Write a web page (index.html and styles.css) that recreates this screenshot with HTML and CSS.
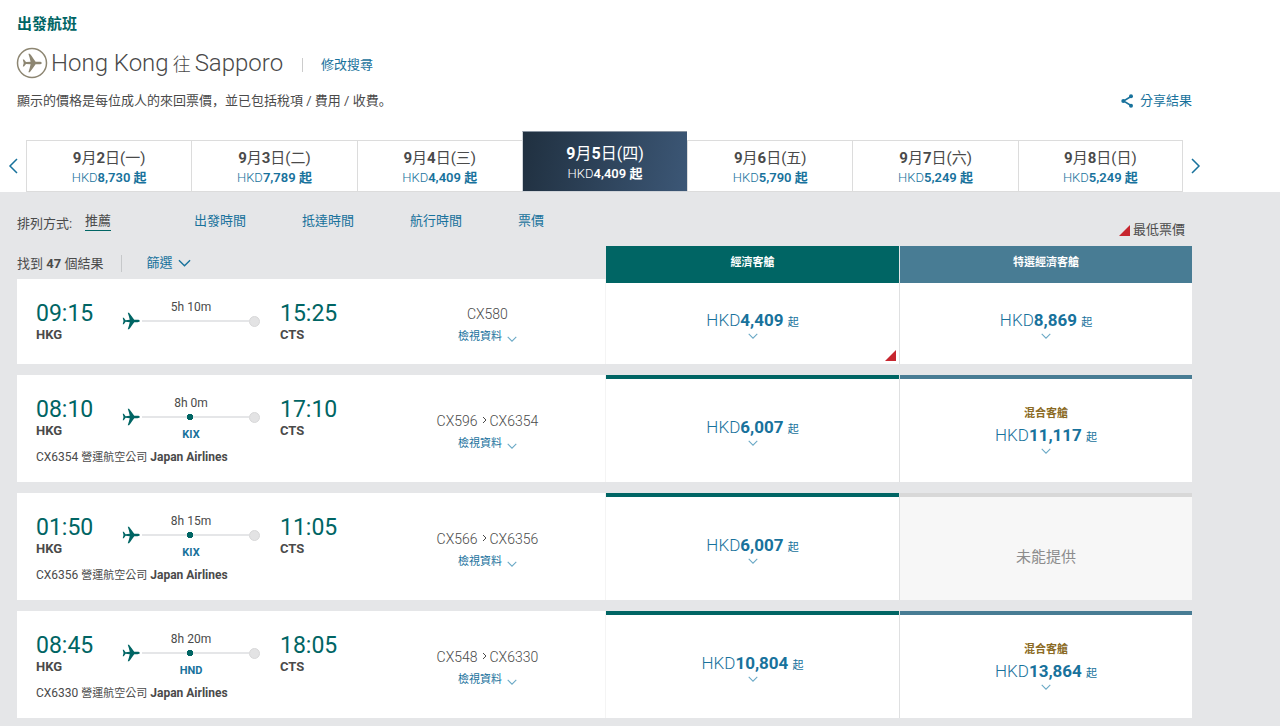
FILE: index.html
```html
<!DOCTYPE html>
<html lang="zh-Hant">
<head>
<meta charset="utf-8">
<meta name="viewport" content="width=device-width, initial-scale=1">
<title>出發航班</title>
<link rel="stylesheet" href="styles.css">
</head>
<body>
<svg class="symbols" aria-hidden="true">
  <symbol id="plane" viewBox="0 0 20 20">
    <path d="M19.800 10c0-.8-1.200-1.300-2.600-1.300h-3.600C12 6.500 10.200 3.600 7.800.8H6.400c.9 2.600 1.700 5.200 2.200 7.900L4 9.100 2 6.500H.8L1.700 10 .8 13.500H2l2-2.600 4.600.4c-.5 2.700-1.300 5.300-2.200 7.900h1.400c2.400-2.800 4.200-5.700 5.800-7.900h3.600c1.400 0 2.600-.5 2.600-1.300z"/>
  </symbol>
  <symbol id="down" viewBox="0 0 14 8">
    <path d="M1 1l6 6 6-6" fill="none" stroke="currentColor" stroke-width="1.500"/>
  </symbol>
</svg>

<header class="page-head wrap">
  <h1 class="title">出發航班</h1>
  <div class="trip">
    <svg class="trip-icon" viewBox="0 0 32 32" aria-hidden="true">
      <circle cx="16" cy="16" r="14.500" fill="none" stroke="currentColor" stroke-width="1.500"/>
      <use href="#plane" x="6" y="6" width="20" height="20"/>
    </svg>
    <h2 class="route-name">Hong Kong<span class="to">往</span>Sapporo</h2>
    <a class="modify" href="#">修改搜尋</a>
  </div>
  <div class="note-row">
    <p class="note" lang="zh-Hans">顯示的價格是每位成人的來回票價，並已包括稅項 / 費用 / 收費。</p>
    <a class="share" href="#">
      <svg class="share-icon" viewBox="0 0 12 14" aria-hidden="true"><path d="M10 2.500L2.500 7l7.500 4.500" fill="none" stroke="currentColor" stroke-width="1.500"/><circle cx="10" cy="2.300" r="2"/><circle cx="2.300" cy="7" r="2"/><circle cx="10" cy="11.700" r="2"/></svg>
      分享結果
    </a>
  </div>
</header>

<nav class="dates" aria-label="日期">
  <button class="arrow" aria-label="前"><svg viewBox="0 0 10 16"><path d="M9 1L2 8l7 7"/></svg></button>
  <div class="tabs">
    <button class="tab"><span class="day"><b>9</b>月<b>2</b>日(一)</span><span class="fare">HKD<b>8,730 起</b></span></button>
    <button class="tab"><span class="day"><b>9</b>月<b>3</b>日(二)</span><span class="fare">HKD<b>7,789 起</b></span></button>
    <button class="tab"><span class="day"><b>9</b>月<b>4</b>日(三)</span><span class="fare">HKD<b>4,409 起</b></span></button>
    <button class="tab active" aria-current="date"><span class="day"><b>9</b>月<b>5</b>日(四)</span><span class="fare">HKD<b>4,409 起</b></span></button>
    <button class="tab"><span class="day"><b>9</b>月<b>6</b>日(五)</span><span class="fare">HKD<b>5,790 起</b></span></button>
    <button class="tab"><span class="day"><b>9</b>月<b>7</b>日(六)</span><span class="fare">HKD<b>5,249 起</b></span></button>
    <button class="tab"><span class="day"><b>9</b>月<b>8</b>日(日)</span><span class="fare">HKD<b>5,249 起</b></span></button>
  </div>
  <button class="arrow" aria-label="後"><svg viewBox="0 0 10 16"><path d="M1 1l7 7-7 7"/></svg></button>
</nav>

<main class="results">
  <div class="wrap">
    <div class="sort">
      <span class="sort-label">排列方式:</span>
      <button class="sort-by current">推薦</button>
      <button class="sort-by">出發時間</button>
      <button class="sort-by">抵達時間</button>
      <button class="sort-by">航行時間</button>
      <button class="sort-by">票價</button>
      <span class="legend"><svg class="flag" viewBox="0 0 11 11" aria-hidden="true"><path d="M11 0v11H0z"/></svg>最低票價</span>
    </div>

    <div class="columns">
      <div class="found">
        <span class="count">找到 <b>47</b> 個結果</span>
        <button class="filter">篩選<svg class="filter-icon" aria-hidden="true"><use href="#down"/></svg></button>
      </div>
      <div class="cabin economy">經濟客艙</div>
      <div class="cabin premium">特選經濟客艙</div>
    </div>

    <article class="card">
      <div class="flight">
        <div class="leg">
          <div class="stop"><span class="time">09:15</span><span class="code">HKG</span></div>
          <div class="path"><span class="duration">5h 10m</span><span class="track"><svg class="plane" aria-hidden="true"><use href="#plane"/></svg><span class="line"></span><span class="end"></span></span></div>
          <div class="stop"><span class="time">15:25</span><span class="code">CTS</span></div>
        </div>
      </div>
      <div class="info"><span class="numbers">CX580</span><button class="details">檢視資料<svg class="chev" aria-hidden="true"><use href="#down"/></svg></button></div>
      <button class="price economy"><span class="amount">HKD<b>4,409</b> <small>起</small></span><svg class="chev" aria-hidden="true"><use href="#down"/></svg><svg class="flag lowest" viewBox="0 0 11 11" aria-hidden="true"><path d="M11 0v11H0z"/></svg></button>
      <button class="price premium"><span class="amount">HKD<b>8,869</b> <small>起</small></span><svg class="chev" aria-hidden="true"><use href="#down"/></svg></button>
    </article>

    <article class="card">
      <div class="flight">
        <div class="leg">
          <div class="stop"><span class="time">08:10</span><span class="code">HKG</span></div>
          <div class="path"><span class="duration">8h 0m</span><span class="track"><svg class="plane" aria-hidden="true"><use href="#plane"/></svg><span class="line via"></span><span class="end"></span></span><a class="via-code" href="#">KIX</a></div>
          <div class="stop"><span class="time">17:10</span><span class="code">CTS</span></div>
        </div>
        <p class="operated">CX6354 <span class="by">營運航空公司</span> <b>Japan Airlines</b></p>
      </div>
      <div class="info"><span class="numbers">CX596<svg class="next" viewBox="0 0 5 8" aria-hidden="true"><path d="M1 1l3 3-3 3"/></svg>CX6354</span><button class="details">檢視資料<svg class="chev" aria-hidden="true"><use href="#down"/></svg></button></div>
      <button class="price economy"><span class="amount">HKD<b>6,007</b> <small>起</small></span><svg class="chev" aria-hidden="true"><use href="#down"/></svg></button>
      <button class="price premium"><span class="mixed">混合客艙</span><span class="amount">HKD<b>11,117</b> <small>起</small></span><svg class="chev" aria-hidden="true"><use href="#down"/></svg></button>
    </article>

    <article class="card">
      <div class="flight">
        <div class="leg">
          <div class="stop"><span class="time">01:50</span><span class="code">HKG</span></div>
          <div class="path"><span class="duration">8h 15m</span><span class="track"><svg class="plane" aria-hidden="true"><use href="#plane"/></svg><span class="line via"></span><span class="end"></span></span><a class="via-code" href="#">KIX</a></div>
          <div class="stop"><span class="time">11:05</span><span class="code">CTS</span></div>
        </div>
        <p class="operated">CX6356 <span class="by">營運航空公司</span> <b>Japan Airlines</b></p>
      </div>
      <div class="info"><span class="numbers">CX566<svg class="next" viewBox="0 0 5 8" aria-hidden="true"><path d="M1 1l3 3-3 3"/></svg>CX6356</span><button class="details">檢視資料<svg class="chev" aria-hidden="true"><use href="#down"/></svg></button></div>
      <button class="price economy"><span class="amount">HKD<b>6,007</b> <small>起</small></span><svg class="chev" aria-hidden="true"><use href="#down"/></svg></button>
      <div class="price none">未能提供</div>
    </article>

    <article class="card">
      <div class="flight">
        <div class="leg">
          <div class="stop"><span class="time">08:45</span><span class="code">HKG</span></div>
          <div class="path"><span class="duration">8h 20m</span><span class="track"><svg class="plane" aria-hidden="true"><use href="#plane"/></svg><span class="line via"></span><span class="end"></span></span><a class="via-code" href="#">HND</a></div>
          <div class="stop"><span class="time">18:05</span><span class="code">CTS</span></div>
        </div>
        <p class="operated">CX6330 <span class="by">營運航空公司</span> <b>Japan Airlines</b></p>
      </div>
      <div class="info"><span class="numbers">CX548<svg class="next" viewBox="0 0 5 8" aria-hidden="true"><path d="M1 1l3 3-3 3"/></svg>CX6330</span><button class="details">檢視資料<svg class="chev" aria-hidden="true"><use href="#down"/></svg></button></div>
      <button class="price economy"><span class="amount">HKD<b>10,804</b> <small>起</small></span><svg class="chev" aria-hidden="true"><use href="#down"/></svg></button>
      <button class="price premium"><span class="mixed">混合客艙</span><span class="amount">HKD<b>13,864</b> <small>起</small></span><svg class="chev" aria-hidden="true"><use href="#down"/></svg></button>
    </article>
  </div>
</main>
</body>
</html>
```
FILE: styles.css
```css
:root {
  --green: #006564;
  --slate: #487c94;
  --link: #18729c;
  --text: #4a4a4a;
  --grey: #e5e6e8;
  --red: #c7262f;
  --columns: 588fr 294fr 293fr;
}
* { box-sizing: border-box; }
body {
  margin: 0;
  font: 13px/20px Roboto, "Noto Sans CJK TC", sans-serif;
  color: var(--text);
  background: #fff;
}
h1, h2, p { margin: 0; }
b { font-weight: 700; }
a { color: var(--link); text-decoration: none; }
button {
  margin: 0;
  padding: 0;
  border: 0;
  background: none;
  font: inherit;
  color: var(--link);
  cursor: pointer;
}
svg { display: block; flex: none; fill: currentColor; }
.symbols { position: absolute; width: 0; height: 0; }
.wrap { max-width: 1192px; padding-left: 17px; }

.page-head { padding-top: 14px; }
.title { font-size: 15px; line-height: 20px; font-weight: 700; color: var(--green); }
.trip { display: flex; align-items: center; height: 32px; margin-top: 13px; }
.trip-icon { width: 32px; height: 32px; margin-left: -1px; color: #8d8672; }
.route-name { margin-left: 3px; padding-top: 1px; font-size: 24px; line-height: 32px; font-weight: 300; }
.to { margin: 0 4px; font-size: 18px; }
.modify { margin: 4px 0 0 19px; padding-left: 18px; border-left: 1px solid #ccc; line-height: 14px; }
.note-row { display: flex; justify-content: space-between; align-items: center; margin-top: 12px; }
.note { font-family: Roboto, "Noto Sans CJK SC", sans-serif; }
.share { display: flex; align-items: center; gap: 7px; }
.share-icon { width: 12px; height: 14px; }

.dates { display: flex; align-items: stretch; max-width: 1209px; margin-top: 20px; }
.arrow { width: 26px; padding-top: 9px; display: flex; justify-content: center; align-items: center; }
.arrow svg { width: 10px; height: 16px; fill: none; stroke: currentColor; stroke-width: 1.500; }
.tabs { flex: 1; display: grid; grid-template-columns: repeat(7, 1fr); align-items: end; }
.tab {
  display: flex;
  flex-direction: column;
  align-items: center;
  height: 52px;
  padding-top: 7px;
  border: 1px solid #dcdcdc;
  border-right: 0;
}
.tab:last-child { border-right: 1px solid #dcdcdc; }
.day { font-size: 15px; line-height: 20px; color: var(--text); }
.fare { font-size: 13px; line-height: 19px; font-weight: 300; }
.fare b { font-weight: 600; }
.tab.active {
  height: 61px;
  padding-top: 11px;
  border-color: #d0d4d9;
  border-top: 1px solid #8893a0;
  background: linear-gradient(100deg, #203040, #3c5776);
  color: #fff;
}
.tab.active .day { color: #fff; font-size: 16px; line-height: 21px; }

.results { background: var(--grey); min-height: 534px; padding-bottom: 8px; }
.sort { display: flex; height: 54px; padding-top: 19px; }
.sort-label { width: 68px; margin-top: 3px; }
.sort-by { width: 108px; text-align: left; align-self: flex-start; line-height: 19px; }
.sort-by.current { width: auto; margin-right: 83px; color: var(--text); border-bottom: 1px solid var(--green); }
.sort-by:last-of-type { width: auto; }
.legend { display: flex; align-items: center; gap: 3px; margin: 9px 7px 0 auto; height: 20px; }
.flag { width: 11px; height: 11px; color: var(--red); }

.columns { display: grid; grid-template-columns: var(--columns); height: 33px; }
.found { display: flex; align-items: center; }
.count { padding-right: 18px; border-right: 1px solid #c6c8ca; line-height: 17px; }
.filter { display: flex; align-items: center; gap: 6px; margin-left: 24px; }
.filter-icon { width: 13px; height: 8px; }
.cabin { text-align: center; font-size: 11px; line-height: 34px; font-weight: 700; color: #fff; margin-left: 1px; }
.cabin.economy { background: var(--green); }
.cabin.premium { background: var(--slate); }

.card {
  display: grid;
  grid-template-columns: var(--columns);
  min-height: 85px;
  margin-bottom: 11px;
  background: #fff;
}
.card:last-child { margin-bottom: 0; }
.flight { grid-area: 1 / 1; padding: 21px 0 16px 19px; }
.leg { display: flex; }
.stop { width: 60px; display: flex; flex-direction: column; }
.time { font-size: 23px; line-height: 28px; color: var(--green); }
.code { font-size: 13px; line-height: 14px; font-weight: 700; }
.path { width: 138px; height: 42px; margin: 0 20px 0 26px; display: flex; flex-direction: column; align-items: center; }
.duration { font-size: 12px; line-height: 14px; }
.track { display: flex; align-items: center; align-self: stretch; height: 14px; }
.plane { width: 18px; height: 18px; color: var(--green); }
.line { flex: 1; height: 2px; margin-left: 2px; background: var(--grey); }
.line.via { background: radial-gradient(circle, var(--green) 3px, transparent 3px) 44px 0 / 8px 6px no-repeat, linear-gradient(var(--grey), var(--grey)) 0 2px / 100% 2px no-repeat; height: 6px; }
.end { width: 11px; height: 11px; border-radius: 50%; background: #e3e3e4; border: 1px solid #d8d8d9; }
.via-code { font-size: 11px; line-height: 16px; font-weight: 700; margin-top: 3px; }
.operated { margin-top: 10px; font-size: 12px; line-height: 18px; }
.by { font-size: 11px; line-height: 12px; }
.info {
  grid-area: 1 / 1;
  justify-self: end;
  width: 40%;
  padding-top: 9px;
  display: flex;
  flex-direction: column;
  align-items: center;
  justify-content: center;
}
.numbers { display: flex; align-items: center; font-size: 14px; line-height: 22px; font-weight: 300; }
.next { width: 5px; height: 8px; margin: 0 3px 3px 4px; fill: none; stroke: currentColor; }
.details { display: flex; align-items: center; gap: 5px; font-size: 11px; line-height: 24px; }
.details .chev { margin-top: 3px; }
.chev { width: 10px; height: 6px; color: #6ba9c6; }
.price {
  display: flex;
  flex-direction: column;
  align-items: center;
  justify-content: center;
  margin-left: 1px;
  border-top: 4px solid;
  position: relative;
}
.price.economy { border-top-color: var(--green); box-shadow: -1px 0 #f4f4f4; }
.price.premium { border-top-color: var(--slate); }
.price.none { border-top-color: #d8d8d8; background: #f7f7f7; color: #8c8c8c; font-size: 15px; padding-top: 16px; }
.price:last-child { box-shadow: -1px 0 #dfe0e1; }
.amount { font-size: 17px; line-height: 26px; font-weight: 300; }
.amount small { font-size: 11px; font-weight: 400; line-height: 12px; }
.mixed { font-size: 11px; line-height: 17px; font-weight: 700; color: #8b6a24; }
.price .chev { margin-bottom: 2px; }
.price .lowest { position: absolute; right: 3px; bottom: 3px; }
```
